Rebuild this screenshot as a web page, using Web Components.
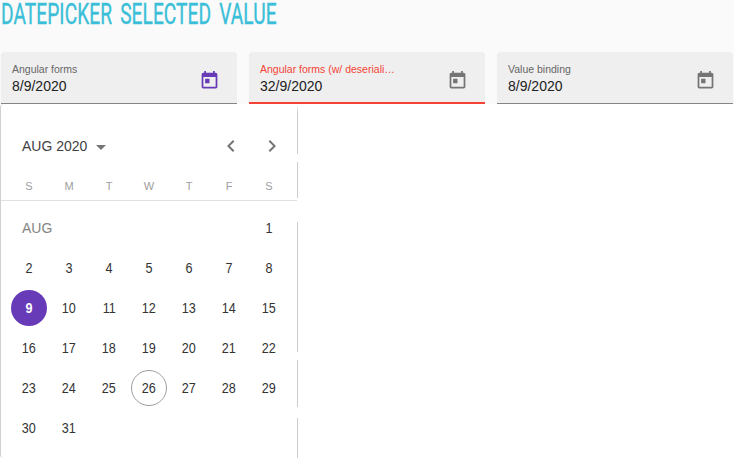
<!DOCTYPE html>
<html lang="en">
<head>
<meta charset="utf-8">
<title>Datepicker selected value</title>
<style>
html,body{margin:0;height:100%;overflow:hidden;background:#fff;font-family:"Liberation Sans",Arial,sans-serif}
</style>
</head>
<body>
<demo-page></demo-page>
<script>
const define = (name, html, setup) => customElements.define(name, class extends HTMLElement {
  constructor() {
    super();
    const t = document.createElement('template');
    t.innerHTML = html;
    this.attachShadow({mode: 'open'}).append(t.content.cloneNode(true));
    if (setup) setup(this.shadowRoot, this);
  }
});

define('calendar-icon', `<style>:host{display:block;width:21px;height:21px}svg{display:block}</style>
<svg width="21" height="21" viewBox="0 0 24 24" fill="currentColor"><path d="M19 3h-1V1h-2v2H8V1H6v2H5c-1.110 0-1.990.9-1.990 2L3 19c0 1.100.89 2 2 2h14c1.100 0 2-.9 2-2V5c0-1.100-.9-2-2-2zm0 16H5V8h14v11zM7 10h5v5H7z"/></svg>`);

define('date-field', `<style>
:host{display:flex;box-sizing:border-box;width:236px;height:52px;padding:11px 17px 0 11px;background:#efefef;border-radius:4px 4px 0 0;border-bottom:1px solid #858585;color:#757575;justify-content:space-between}
:host([invalid]){border-bottom:2px solid #f44336}
:host([active]) calendar-icon{color:#673ab7}
.text{width:138px}
.label{font-size:10.5px;line-height:12px;white-space:nowrap;color:#666}
:host([invalid]) .label{color:#f44336}
.value{font-size:14px;line-height:16px;color:#212121;margin-top:3px}
calendar-icon{margin-top:7px}
</style><div class="text"><div class="label"><slot name="label"></slot></div><div class="value"><slot></slot></div></div><calendar-icon></calendar-icon>`);

define('month-header', `<style>
:host{display:flex;height:40px;align-items:center;padding:0 13px 0 21px;font-size:14px;color:#424242}
.caret{margin:2px 0 0 9px;border:5px solid transparent;border-top-color:#757575;border-bottom:0}
.nav{margin-left:auto;display:flex;gap:17px}
svg{display:block;fill:#757575}
</style><slot></slot><span class="caret"></span><div class="nav"><svg width="24" height="24" viewBox="0 0 24 24"><path d="M15.410 7.410 14 6l-6 6 6 6 1.410-1.410L10.830 12z"/></svg><svg width="24" height="24" viewBox="0 0 24 24"><path d="M10 6 8.590 7.410 13.170 12l-4.580 4.590L10 18l6-6z"/></svg></div>`);

define('calendar-day', `<style>
:host{display:flex;justify-content:center;align-items:center;height:40px;font-size:14px;color:#333}
span{box-sizing:border-box;width:36px;height:36px;border-radius:50%;display:flex;align-items:center;justify-content:center}
b{font-weight:400;transform:scaleX(.9)}
:host([selected]) span{background:#673ab7;color:#fff}
:host([selected]) b{font-weight:bold}
:host([today]) span{border:1px solid #9e9e9e}
</style><span><b><slot></slot></b></span>`);

define('calendar-panel', `<style>
:host{display:grid;grid-template-columns:296px 1px;box-sizing:border-box;width:298px;height:354px;border-left:1px solid #d0d0d0;background:#fff;border-radius:4px}
.edge{background:linear-gradient(#fff,#ccc 8px 50px,#fff 50px 58px,#ccc 58px 94px,#fff 94px 118px,#ccc 118px 248px,#fff 248px 256px,#ccc 256px 303px,#fff 303px 314px,#ccc 314px)}
.body{padding-top:22px}
.week,.days{display:grid;grid-template-columns:repeat(7,40px);padding:0 8px}
.week{box-sizing:border-box;height:35px;border-bottom:1px solid #e0e0e0;font-size:11px;text-align:center;line-height:40px;color:#9e9e9e}
.days{padding-top:7px}
.month{grid-column:span 6;padding-left:13px;font-size:14px;line-height:40px;color:#858585}
</style><div class="body"><month-header>AUG 2020</month-header><div class="week"></div><div class="days"><div class="month">AUG</div></div></div><div class="edge"></div>`, root => {
  for (const d of 'SMTWTFS') {
    const s = document.createElement('span');
    s.textContent = d;
    root.querySelector('.week').append(s);
  }
  for (let n = 1; n <= 31; n++) {
    const d = document.createElement('calendar-day');
    d.textContent = n;
    if (n === 9) d.setAttribute('selected', '');
    if (n === 26) d.setAttribute('today', '');
    root.querySelector('.days').append(d);
  }
});

define('page-title', `<style>
:host{display:block;height:52px;color:#3bbfd8;white-space:nowrap}
svg{display:block;overflow:visible}
text{font:400 29.5px Roboto,sans-serif;fill:currentColor;stroke:currentColor;stroke-width:.4px;word-spacing:5px}
</style><svg width="280" height="30"><text y="24" transform="scale(.65 1)" textLength="424" lengthAdjust="spacing">DATEPICKER SELECTED VALUE</text></svg>`);

define('demo-page', `<style>
:host{display:block;width:734px;height:458px;overflow:hidden}
header{height:104px;background:#fafafa}
page-title{padding-left:1px}
.fields{display:flex;gap:12px;padding-left:1px}
</style><header><page-title></page-title>
<div class="fields"><date-field active><span slot="label">Angular forms</span>8/9/2020</date-field>
<date-field invalid><span slot="label">Angular forms (w/ deseriali…</span>32/9/2020</date-field>
<date-field><span slot="label">Value binding</span>8/9/2020</date-field></div></header>
<calendar-panel></calendar-panel>`);
</script>
</body>
</html>
